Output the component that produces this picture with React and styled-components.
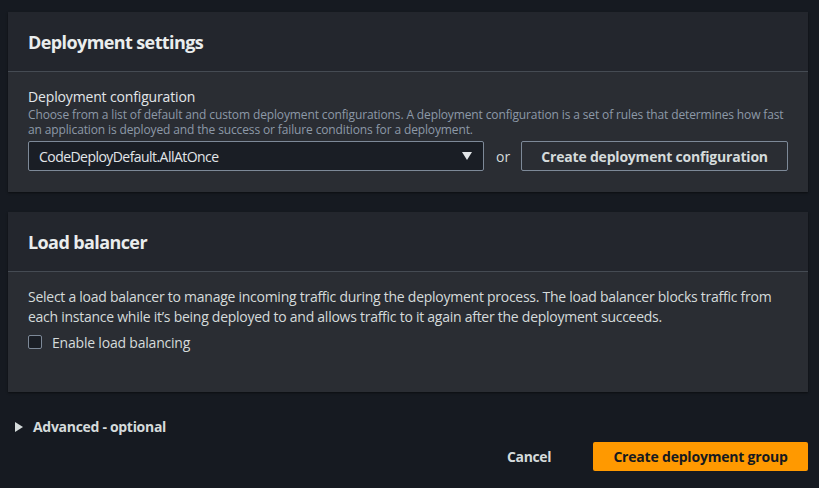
import React from "react";
import styled, { createGlobalStyle } from "styled-components";

const Global = createGlobalStyle`
  html, body { margin: 0; padding: 0; background: #161a21; }
  body { font-family: "Open Sans", "Noto Sans", sans-serif; color: #d5dbdb; }
  * { box-sizing: border-box; }
`;

const Page = styled.div`
  width: 819px;
  height: 488px;
  padding: 12px 11px 0 8px;
  display: flex;
  flex-direction: column;
  gap: 20px;
`;

const Panel = styled.section`
  background: #2a2d33;
  box-shadow: 0 1px 2px rgba(0,0,0,0.5);
  display: flex;
  flex-direction: column;
`;

const PanelHeader = styled.div`
  height: 60px;
  background: #23262d;
  border-bottom: 1px solid #454b53;
  padding: 1px 20px 0;
  display: flex;
  align-items: center;
`;

const Title = styled.h2`
  margin: 0;
  font-size: 18px;
  font-weight: 700;
  color: #eaeded;
  letter-spacing: -0.6px;
`;

const PanelBody = styled.div`
  padding: ${p => p.$pt || 15}px 20px ${p => p.$pb || 21}px 20px;
  display: flex;
  flex-direction: column;
`;

const Label = styled.div`
  font-size: 14px;
  line-height: 20px;
  color: #e2e6e9;
  letter-spacing: -0.15px;
`;

const Description = styled.div`
  font-size: 12px;
  line-height: 15px;
  color: #8d99a8;
  letter-spacing: -0.13px;
  margin-bottom: 4px;
`;

const Row = styled.div`
  display: flex;
  align-items: center;
`;

const Select = styled.div`
  width: 458px;
  height: 30px;
  background: #1a1e25;
  border: 1px solid #7d8998;
  border-radius: 2px;
  padding: 0 10px;
  display: flex;
  align-items: center;
  justify-content: space-between;
  font-size: 14px;
  color: #e2e6e9;
  letter-spacing: -0.55px;
`;

const Or = styled.span`
  font-size: 14px;
  color: #d5dbdb;
  margin: 0 11px 0 12px;
`;

const OutlineButton = styled.button`
  width: 268px;
  height: 30px;
  background: transparent;
  border: 1px solid #7d8998;
  border-radius: 2px;
  color: #d5dbdb;
  font-family: inherit;
  font-size: 14px;
  font-weight: 700;
  letter-spacing: -0.2px;
  padding: 0;
`;

const Paragraph = styled.p`
  margin: 0;
  font-size: 14px;
  line-height: 20px;
  color: #d5dbdb;
  letter-spacing: -0.26px;
`;

const CheckRow = styled.label`
  display: flex;
  align-items: center;
  gap: 10px;
  height: 20px;
  margin-top: 5px;
  font-size: 14px;
  color: #d5dbdb;
  letter-spacing: -0.2px;
`;

const Box = styled.span`
  width: 14px;
  height: 14px;
  border: 1px solid #7d8998;
  border-radius: 2px;
  background: #1a1e25;
`;

const Expander = styled.div`
  display: flex;
  align-items: center;
  gap: 10px;
  padding: 5px 0 0 7px;
  font-size: 14px;
  font-weight: 700;
  color: #d5dbdb;
  letter-spacing: -0.3px;
`;

const Actions = styled.div`
  display: flex;
  justify-content: flex-end;
  align-items: center;
  gap: 42px;
  margin-top: -14px;
`;

const LinkButton = styled.button`
  background: none;
  border: none;
  color: #d5dbdb;
  font-family: inherit;
  font-size: 14px;
  font-weight: 700;
  padding: 0;
  letter-spacing: -0.4px;
`;

const PrimaryButton = styled.button`
  width: 215px;
  height: 29px;
  background: #ff9900;
  border: none;
  border-radius: 2px;
  color: #16191f;
  font-family: inherit;
  font-size: 14px;
  font-weight: 700;
  letter-spacing: -0.2px;
  padding: 0;
`;

export default function App() {
  return (
    <>
      <Global />
      <Page>
        <Panel>
          <PanelHeader><Title>Deployment settings</Title></PanelHeader>
          <PanelBody>
            <Label>Deployment configuration</Label>
            <Description>
              Choose from a list of default and custom deployment configurations. A deployment configuration is a set of rules that determines how fast an application is deployed and the success or failure conditions for a deployment.
            </Description>
            <Row>
              <Select>
                <span>CodeDeployDefault.AllAtOnce</span>
                <svg width="12" height="10" viewBox="0 0 12 10"><path d="M1 1h10L6 9z" fill="#e2e6e9" /></svg>
              </Select>
              <Or>or</Or>
              <OutlineButton>Create deployment configuration</OutlineButton>
            </Row>
          </PanelBody>
        </Panel>
        <Panel>
          <PanelHeader><Title>Load balancer</Title></PanelHeader>
          <PanelBody $pb={40}>
            <Paragraph>
              Select a load balancer to manage incoming traffic during the deployment process. The load balancer blocks traffic from each instance while it’s being deployed to and allows traffic to it again after the deployment succeeds.
            </Paragraph>
            <CheckRow><Box />Enable load balancing</CheckRow>
          </PanelBody>
        </Panel>
        <Expander>
          <svg width="8" height="10" viewBox="0 0 8 10"><path d="M0 0l8 5-8 5z" fill="#d5dbdb" /></svg>
          Advanced - optional
        </Expander>
        <Actions>
          <LinkButton>Cancel</LinkButton>
          <PrimaryButton>Create deployment group</PrimaryButton>
        </Actions>
      </Page>
    </>
  );
}
